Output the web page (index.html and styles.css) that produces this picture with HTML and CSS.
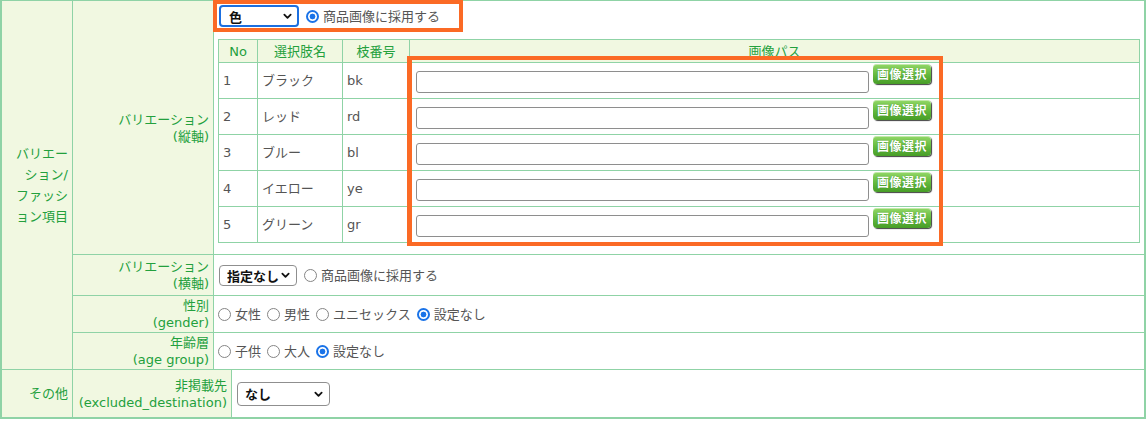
FILE: index.html
```html
<!DOCTYPE html>
<html lang="ja">
<head>
<meta charset="utf-8">
<title>バリエーション設定</title>
<link rel="stylesheet" href="styles.css">
</head>
<body>
<div class="sheet">
  <div class="group">
    <div class="cat"><span>バリエーション/ファッション項目</span></div>
    <div class="rows">
      <div class="row r1">
        <div class="label"><span>バリエーション</span><span>(縦軸)</span></div>
        <div class="value v1">
          <div class="line">
            <span class="selwrap"><select class="sel focus w-color"><option>色</option></select><svg class="chev" viewBox="0 0 10 7"><path d="M1.5 1.5L5 5L8.5 1.5"/></svg></span>
            <label class="opt first"><input type="radio" name="img1" checked>商品画像に採用する</label>
          </div>
          <table class="opts">
            <colgroup><col class="c-no"><col class="c-name"><col class="c-code"><col></colgroup>
            <thead><tr><th>No</th><th>選択肢名</th><th>枝番号</th><th>画像パス</th></tr></thead>
            <tbody>
              <tr><td>1</td><td>ブラック</td><td>bk</td><td class="pathcell"><div class="pathbox"><input class="path" type="text"><button class="btn" type="button">画像選択</button></div></td></tr>
              <tr><td>2</td><td>レッド</td><td>rd</td><td class="pathcell"><div class="pathbox"><input class="path" type="text"><button class="btn" type="button">画像選択</button></div></td></tr>
              <tr><td>3</td><td>ブルー</td><td>bl</td><td class="pathcell"><div class="pathbox"><input class="path" type="text"><button class="btn" type="button">画像選択</button></div></td></tr>
              <tr><td>4</td><td>イエロー</td><td>ye</td><td class="pathcell"><div class="pathbox"><input class="path" type="text"><button class="btn" type="button">画像選択</button></div></td></tr>
              <tr><td>5</td><td>グリーン</td><td>gr</td><td class="pathcell"><div class="pathbox"><input class="path" type="text"><button class="btn" type="button">画像選択</button></div></td></tr>
            </tbody>
          </table>
        </div>
      </div>
      <div class="row r2">
        <div class="label"><span>バリエーション</span><span>(横軸)</span></div>
        <div class="value">
          <span class="selwrap"><select class="sel w-none"><option>指定なし</option></select><svg class="chev" viewBox="0 0 10 7"><path d="M1.5 1.5L5 5L8.5 1.5"/></svg></span>
          <label class="opt first"><input type="radio" name="img2">商品画像に採用する</label>
        </div>
      </div>
      <div class="row r3">
        <div class="label"><span>性別</span><span>(gender)</span></div>
        <div class="value">
          <label class="opt"><input type="radio" name="gender">女性</label>
          <label class="opt"><input type="radio" name="gender">男性</label>
          <label class="opt"><input type="radio" name="gender">ユニセックス</label>
          <label class="opt"><input type="radio" name="gender" checked>設定なし</label>
        </div>
      </div>
      <div class="row r4">
        <div class="label"><span>年齢層</span><span>(age group)</span></div>
        <div class="value">
          <label class="opt"><input type="radio" name="age">子供</label>
          <label class="opt"><input type="radio" name="age">大人</label>
          <label class="opt"><input type="radio" name="age" checked>設定なし</label>
        </div>
      </div>
    </div>
  </div>
  <div class="group">
    <div class="cat"><span>その他</span></div>
    <div class="rows">
      <div class="row r5">
        <div class="label wide"><span>非掲載先</span><span>(excluded_destination)</span></div>
        <div class="value">
          <span class="selwrap"><select class="sel w-dest"><option>なし</option></select><svg class="chev" viewBox="0 0 10 7"><path d="M1.5 1.5L5 5L8.5 1.5"/></svg></span>
        </div>
      </div>
    </div>
  </div>
  <div class="mark mark1"></div>
  <div class="mark mark2"></div>
</div>
</body>
</html>
```
FILE: styles.css
```css
* { box-sizing: border-box; }
html, body { margin: 0; background: #fff; }
body {
  font-family: "DejaVu Sans", "Noto Sans CJK JP", sans-serif;
  font-size: 13px;
  color: #555;
  line-height: 17px;
}

.sheet {
  position: relative;
  width: 1146px;
  border: 2px solid #8fd3a6;
  border-top-width: 1px;
}

.group { display: flex; }
.group + .group { border-top: 1px solid #8fd3a6; }

.cat {
  width: 71px;
  flex: none;
  background: #f1f8e1;
  border-right: 1px solid #8fd3a6;
  display: flex;
  align-items: center;
  justify-content: flex-end;
  padding: 0 4px 0 12px;
  color: #23a03d;
  text-align: right;
  line-height: 21px;
}

.rows { flex: 1; min-width: 0; }
.row { display: flex; }
.row + .row { border-top: 1px solid #8fd3a6; }
.r1 { height: 253px; }
.r2 { height: 41px; }
.r3, .r4 { height: 37px; }
.r5 { height: 47px; }

.label {
  width: 141px;
  flex: none;
  background: #f1f8e1;
  border-right: 1px solid #8fd3a6;
  display: flex;
  flex-direction: column;
  justify-content: center;
  align-items: flex-end;
  text-align: right;
  padding-right: 4px;
  color: #23a03d;
  line-height: 17px;
}
.label.wide { width: 159px; }

.value {
  flex: 1;
  min-width: 0;
  display: flex;
  align-items: center;
  padding: 0 4px;
}
.v1 {
  flex-direction: column;
  align-items: stretch;
  padding: 4px 4px 0 4px;
}
.line {
  display: flex;
  align-items: center;
  height: 22px;
}

.selwrap {
  position: relative;
  display: inline-flex;
  margin-left: 1px;
}
.sel {
  appearance: none;
  -webkit-appearance: none;
  font-family: "Noto Sans CJK JP", sans-serif;
  font-weight: bold;
  font-size: 13px;
  color: #111;
  background: #fff;
  border: 1px solid #8f8f8f;
  border-radius: 4px;
  height: 21px;
  line-height: 19px;
  padding: 0 0 0 7px;
  margin: 0;
}
.sel.focus {
  border: 2px solid #1b6fe0;
  height: 22px;
  padding-left: 8px;
}
.w-color { width: 80px; }
.w-none { width: 78px; }
.w-dest { width: 93px; height: 24px; }
.chev {
  position: absolute;
  right: 7px;
  top: 50%;
  width: 9px;
  height: 7px;
  margin-top: -3px;
  pointer-events: none;
  fill: none;
  stroke: #111;
  stroke-width: 2;
  stroke-linecap: round;
  stroke-linejoin: round;
}

.opt {
  display: inline-flex;
  align-items: center;
  white-space: nowrap;
}
.opt + .opt { margin-left: 6px; }
.opt.first { margin-left: 7px; }
input[type="radio"] {
  appearance: none;
  -webkit-appearance: none;
  width: 13px;
  height: 13px;
  margin: 0 4px 0 0;
  border: 1px solid #858585;
  border-radius: 50%;
  background: #fff;
  flex: none;
}
input[type="radio"]:checked {
  border: 2px solid #1a73e8;
  background: radial-gradient(circle at center, #1a73e8 0 2.6px, #fff 3.2px);
}

.opts {
  width: 100%;
  margin-top: 12px;
  border-collapse: collapse;
  table-layout: fixed;
  border: 1px solid #8fd3a6;
}
.c-no { width: 39px; }
.c-name { width: 85px; }
.c-code { width: 67px; }
.opts th, .opts td {
  border: 1px solid #8fd3a6;
  padding: 0 4px;
  text-align: left;
}
.opts th {
  background: #f1f8e1;
  color: #23a03d;
  font-weight: normal;
  height: 23px;
  text-align: center;
}
.opts td { height: 36px; }
.opts td.pathcell {
  vertical-align: top;
  padding: 1px 6px 0 6px;
}
.pathbox {
  display: flex;
  align-items: flex-start;
}
.path {
  width: 453px;
  height: 22px;
  margin: 7px 0 0 0;
  border: 1px solid #8e8e8e;
  border-radius: 3px;
  background: #fff;
  padding: 0 4px;
}
.btn {
  width: 58px;
  height: 20px;
  margin: 0 0 0 4px;
  padding: 0;
  border: none;
  border-radius: 4px;
  background: linear-gradient(#93d868, #62b93c 55%, #479d27);
  box-shadow: 1px 1px 1px rgba(0, 0, 0, .75), inset 0 1px 0 rgba(255, 255, 255, .45);
  color: #fff;
  font-family: "Noto Sans CJK JP", sans-serif;
  font-weight: bold;
  font-size: 12px;
  letter-spacing: 0.5px;
  line-height: 20px;
  text-shadow: 0 0 1px rgba(0, 80, 0, .5);
}

.mark {
  position: absolute;
  border: 4px solid #fb6a25;
  pointer-events: none;
}
.mark1 { left: 211px; top: -1px; width: 250px; height: 32px; }
.mark2 { left: 405px; top: 55px; width: 536px; height: 190px; border-left-width: 5px; }
```
